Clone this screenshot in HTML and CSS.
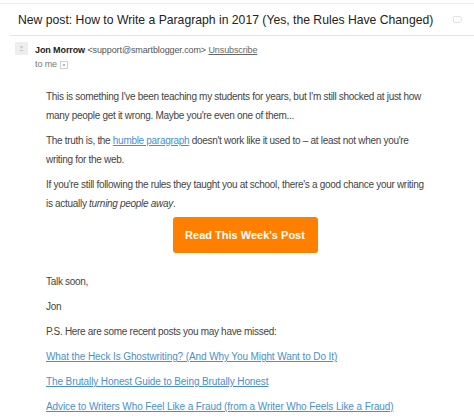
FILE: index.html
```html
<!DOCTYPE html>
<html>
<head>
<meta charset="utf-8">
<link rel="stylesheet" href="styles.css">
</head>
<body>
<div class="mail">
  <div class="subject">
    <h1 class="title">New post: How to Write a Paragraph in 2017 (Yes, the Rules Have Changed)</h1>
    <span class="label-icon"></span>
  </div>
  <div class="sender">
    <div class="avatar">
      <svg width="13" height="13" viewBox="0 0 13 13"><rect width="13" height="13" fill="#eeeeee"/><circle cx="6.5" cy="5" r="1.3" fill="#c8c8c8"/><path d="M4.2 9 Q6.5 6.6 8.8 9 Z" fill="#c8c8c8"/></svg>
    </div>
    <div class="sender-info">
      <div class="from"><b class="name">Jon Morrow</b> <span class="addr">&lt;support@smartblogger.com&gt;</span> <a class="unsub">Unsubscribe</a></div>
      <div class="to">to me <span class="drop"><svg width="6" height="6" viewBox="0 0 6 6"><path d="M1.5 2.5 L4.5 2.5 L3 4 Z" fill="#777"/></svg></span></div>
    </div>
  </div>
  <div class="content">
    <p>This is something I've been teaching my students for years, but I'm still shocked at just how<br>many people get it wrong. Maybe you're even one of them...</p>
    <p>The truth is, the <a class="link">humble paragraph</a> doesn't work like it used to – at least not when you're<br>writing for the web.</p>
    <p>If you're still following the rules they taught you at school, there's a good chance your writing<br>is actually <i>turning people away</i>.</p>
    <div class="cta"><a class="button">Read This Week's Post</a></div>
    <p>Talk soon,</p>
    <p>Jon</p>
    <p>P.S. Here are some recent posts you may have missed:</p>
    <p class="post"><a class="link">What the Heck Is Ghostwriting? (And Why You Might Want to Do It)</a></p>
    <p class="post"><a class="link">The Brutally Honest Guide to Being Brutally Honest</a></p>
    <p class="post"><a class="link">Advice to Writers Who Feel Like a Fraud (from a Writer Who Feels Like a Fraud)</a></p>
  </div>
</div>
</body>
</html>
```
FILE: styles.css
```css
html, body {
  margin: 0;
  padding: 0;
  background: #ffffff;
}
body {
  font-family: "Liberation Sans", Arial, sans-serif;
  color: #222;
}
.mail {
  border-top: 1px solid #ececec;
  margin-top: 3px;
}
.subject {
  display: flex;
  align-items: center;
  justify-content: space-between;
  height: 31px;
  margin-left: 10px;
  padding: 0 12px 0 8px;
  border-bottom: 1px solid #e4e4e4;
}
.title {
  margin: 0;
  font-size: 12.2px;
  font-weight: normal;
  color: #222;
  white-space: nowrap;
}
.label-icon {
  width: 7px;
  height: 5px;
  border: 1px solid #e2e2e2;
  border-radius: 1px 3px 3px 1px;
}
.sender {
  display: flex;
  align-items: flex-start;
  gap: 7px;
  padding: 6px 0 0 15px;
}
.avatar {
  width: 13px;
  height: 13px;
}
.avatar svg {
  display: block;
}
.sender-info {
  font-size: 9px;
  letter-spacing: -0.1px;
  color: #777;
  line-height: 11px;
  padding-top: 3px;
}
.name {
  color: #222;
}
.addr {
  color: #555;
}
.unsub {
  color: #666;
  text-decoration: underline;
}
.to {
  margin-top: 3px;
  display: flex;
  align-items: center;
  gap: 3px;
}
.drop {
  display: inline-flex;
  width: 6px;
  height: 6px;
  border: 1px solid #d0d0d0;
}
.content {
  padding: 17px 0 0 46px;
  width: 420px;
  font-size: 10px;
  letter-spacing: -0.3px;
  line-height: 19px;
  color: #444;
  white-space: nowrap;
}
.content p {
  margin: 0 0 6px;
}
.content .post {
  letter-spacing: -0.1px;
}
.link {
  color: #4a8fd2;
  text-decoration: underline;
}
.cta {
  display: flex;
  justify-content: center;
  padding: 0 0 19px;
  margin-top: -2px;
  margin-left: -46px;
  width: 490px;
}
.button {
  background: #ff7f00;
  color: #fff;
  font-weight: bold;
  font-size: 11px;
  letter-spacing: 0;
  border-radius: 3px;
  width: 145px;
  height: 36px;
  display: flex;
  align-items: center;
  justify-content: center;
}
```
